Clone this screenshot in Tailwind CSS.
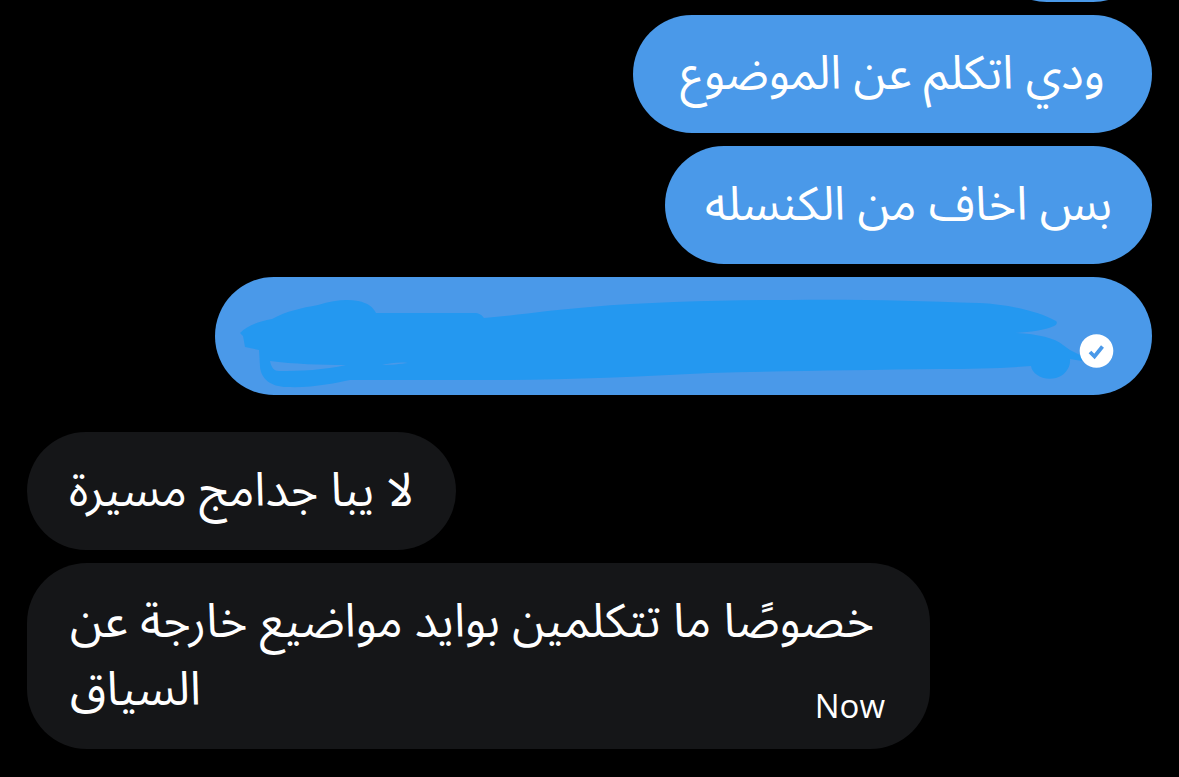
<!DOCTYPE html>
<html lang="ar">
<head>
<meta charset="utf-8">
<title>Messages</title>
<script src="https://cdn.jsdelivr.net/npm/@tailwindcss/browser@4"></script>
</head>
<body class="bg-black text-white text-[47px] leading-[68px] font-[family-name:'Noto_Sans_Arabic','Noto_Sans',serif]">
<main class="flex min-h-screen flex-col gap-[13px] overflow-hidden px-[27px] pb-[27px]">
  <div class="-mt-[116px] h-[118px] w-[164px] shrink-0 self-end rounded-[60px] bg-[#4a99e9]"></div>
  <p dir="rtl" class="min-w-[519px] self-end whitespace-nowrap rounded-[60px] bg-[#4a99e9] px-10 py-[25px] text-center">ودي اتكلم عن الموضوع</p>
  <p dir="rtl" class="self-end whitespace-nowrap rounded-[60px] bg-[#4a99e9] px-10 py-[25px] text-center">بس اخاف من الكنسله</p>
  <div class="flex h-[118px] w-[937px] max-w-full items-center self-end overflow-hidden rounded-[60px] bg-[#4a99e9]">
    <svg class="h-[118px] w-[937px] shrink-0" viewBox="215 277 937 118" role="img" aria-label="Hidden message, sent">
      <path fill="#2498f0" fill-rule="evenodd" d="M240 333C247 326 257 322 272 319C287 311 301 308 318 305C334 300 347 299 358 301C368 303 373 307 376 313H474C479 313 482 315 484 318C519 315 551 310 590 307C650 302 722 300 790 300C856 299 917 301 979 303C1006 304 1038 311 1056 321C1058 323 1056 325 1054 326C1045 330 1030 332 1016 333C1038 334 1055 338 1063 345L1070 350L1082 356V361L1070 359C1071 368 1064 376 1056 378C1043 381 1032 374 1031 366C1005 368 975 369 940 369C860 370 785 371 710 373C634 377 558 380 490 380H350C336 383 313 388 287 387C270 387 261 378 260 367L259 350L245 347L243 336ZM270 361C271 366 273 371 279 371C300 371 325 370 346 365C321 365 293 364 270 361ZM382 365C390 365 401 364 408 363C400 362 390 363 382 365Z"/>
      <circle cx="1096.500" cy="351" r="16.800" fill="#fff"/>
      <path d="M1090 352L1094.500 356.500L1102.500 346.500" fill="none" stroke="#4a99e9" stroke-width="3.800"/>
    </svg>
  </div>
  <p dir="rtl" class="mt-6 self-start whitespace-nowrap rounded-[60px] bg-[#151618] px-[42px] py-[25px] text-center">لا يبا جدامج مسيرة</p>
  <div class="grid w-[903px] max-w-full self-start rounded-[60px] bg-[#151618] py-[25px] pl-[43px] pr-[45px]">
    <p dir="rtl" class="col-start-1 row-start-1 text-left">خصوصًا ما تتكلمين بوايد مواضيع خارجة عن السياق</p>
    <time class="col-start-1 row-start-1 self-end justify-self-end font-[family-name:'Open_Sans',sans-serif] text-[33px] leading-[36px]">Now</time>
  </div>
</main>
</body>
</html>
